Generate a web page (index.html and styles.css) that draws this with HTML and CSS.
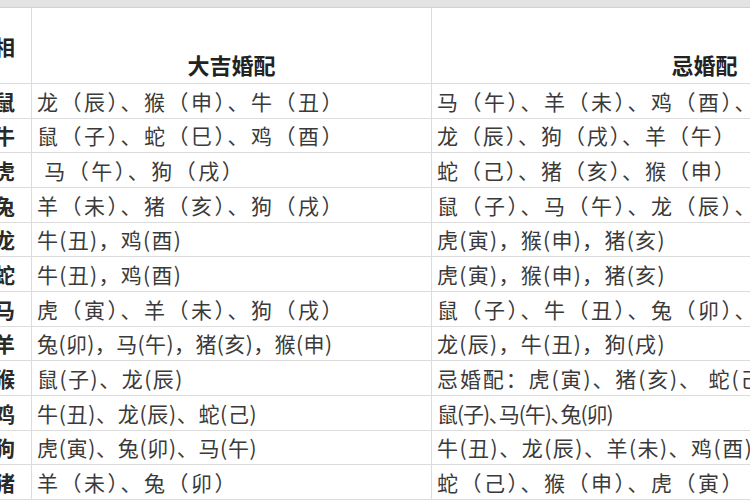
FILE: index.html
```html
<!DOCTYPE html>
<html lang="zh-CN">
<head>
<meta charset="utf-8">
<title>生肖婚配表</title>
<link rel="stylesheet" href="styles.css">
</head>
<body>
<div class="topbar"></div>
<div class="viewport">
  <div class="grid">
    <div class="cell head first">相</div>
    <div class="cell head title">大吉婚配</div>
    <div class="cell head title">忌婚配</div>

    <div class="cell first">鼠</div><div class="cell">龙（辰）、猴（申）、牛（丑）</div><div class="cell">马（午）、羊（未）、鸡（酉）、</div>
    <div class="cell first">牛</div><div class="cell">鼠（子）、蛇（巳）、鸡（酉）</div><div class="cell fw-narrow">龙（辰）、狗（戌）、羊（午）</div>
    <div class="cell first">虎</div><div class="cell">&nbsp;马（午）、狗（戌）</div><div class="cell fw-narrow">蛇（己）、猪（亥）、猴（申）</div>
    <div class="cell first">兔</div><div class="cell">羊（未）、猪（亥）、狗（戌）</div><div class="cell">鼠（子）、马（午）、龙（辰）、</div>
    <div class="cell first">龙</div><div class="cell tight">牛(丑)，鸡(酉)</div><div class="cell tight">虎(寅)，猴(申)，猪(亥)</div>
    <div class="cell first">蛇</div><div class="cell tight">牛(丑)，鸡(酉)</div><div class="cell tight">虎(寅)，猴(申)，猪(亥)</div>
    <div class="cell first">马</div><div class="cell">虎（寅）、羊（未）、狗（戌）</div><div class="cell">鼠（子）、牛（丑）、兔（卯）、</div>
    <div class="cell first">羊</div><div class="cell tighter">兔(卯)，马(午)，猪(亥)，猴(申)</div><div class="cell tight">龙(辰)，牛(丑)，狗(戌)</div>
    <div class="cell first">猴</div><div class="cell wide">鼠(子)、龙(辰)</div><div class="cell fw-narrow">忌婚配：虎(寅)、猪(亥)、 蛇(己)</div>
    <div class="cell first">鸡</div><div class="cell compact">牛(丑)、龙(辰)、蛇(己)</div><div class="cell squeezed">鼠(子)､马(午)､兔(卯)</div>
    <div class="cell first">狗</div><div class="cell compact">虎(寅)、兔(卯)、马(午)</div><div class="cell wide">牛(丑)、龙(辰)、羊(未)、鸡(酉)</div>
    <div class="cell first">猪</div><div class="cell">羊（未）、兔（卯）</div><div class="cell">蛇（己）、猴（申）、虎（寅）</div>
  </div>
</div>
</body>
</html>
```

FILE: styles.css
```css
html, body {
  margin: 0;
  padding: 0;
  background: #ffffff;
}

body {
  width: 750px;
  height: 500px;
  overflow: hidden;
  font-family: "Noto Sans CJK SC", "Noto Sans", sans-serif;
  color: #333333;
}

.topbar {
  height: 7px;
  background: #e3e3e3;
  border-bottom: 1px solid #d2d2d2;
}

.viewport {
  width: 750px;
  overflow: hidden;
}

.grid {
  display: grid;
  grid-template-columns: 42px 400px 546px;
  grid-template-rows: 76px;
  grid-auto-rows: 34.67px;
  margin-left: -10px;
  width: 988px;
}

.cell {
  border-right: 1px solid #dcdcdc;
  border-bottom: 1px solid #dcdcdc;
  font-size: 21px;
  line-height: 24px;
  letter-spacing: 2.5px;
  white-space: nowrap;
  overflow: hidden;
  display: flex;
  align-items: center;
  padding-left: 5px;
  color: #3a3a3a;
}

.fw-narrow {
  letter-spacing: 1.9px;
}

.tight {
  letter-spacing: 1.3px;
}

.tighter {
  letter-spacing: 0.4px;
}

.wide {
  letter-spacing: 1.5px;
}

.compact {
  letter-spacing: 0.7px;
}

.squeezed {
  letter-spacing: -1px;
}

.first {
  padding-left: 4px;
  letter-spacing: 0;
  font-weight: 700;
  color: #2a2a2a;
}

.head {
  font-weight: 700;
  color: #222222;
}

.title {
  justify-content: center;
  align-items: flex-end;
  padding-left: 0;
  padding-bottom: 7px;
  font-size: 22px;
  letter-spacing: 0;
}
```
